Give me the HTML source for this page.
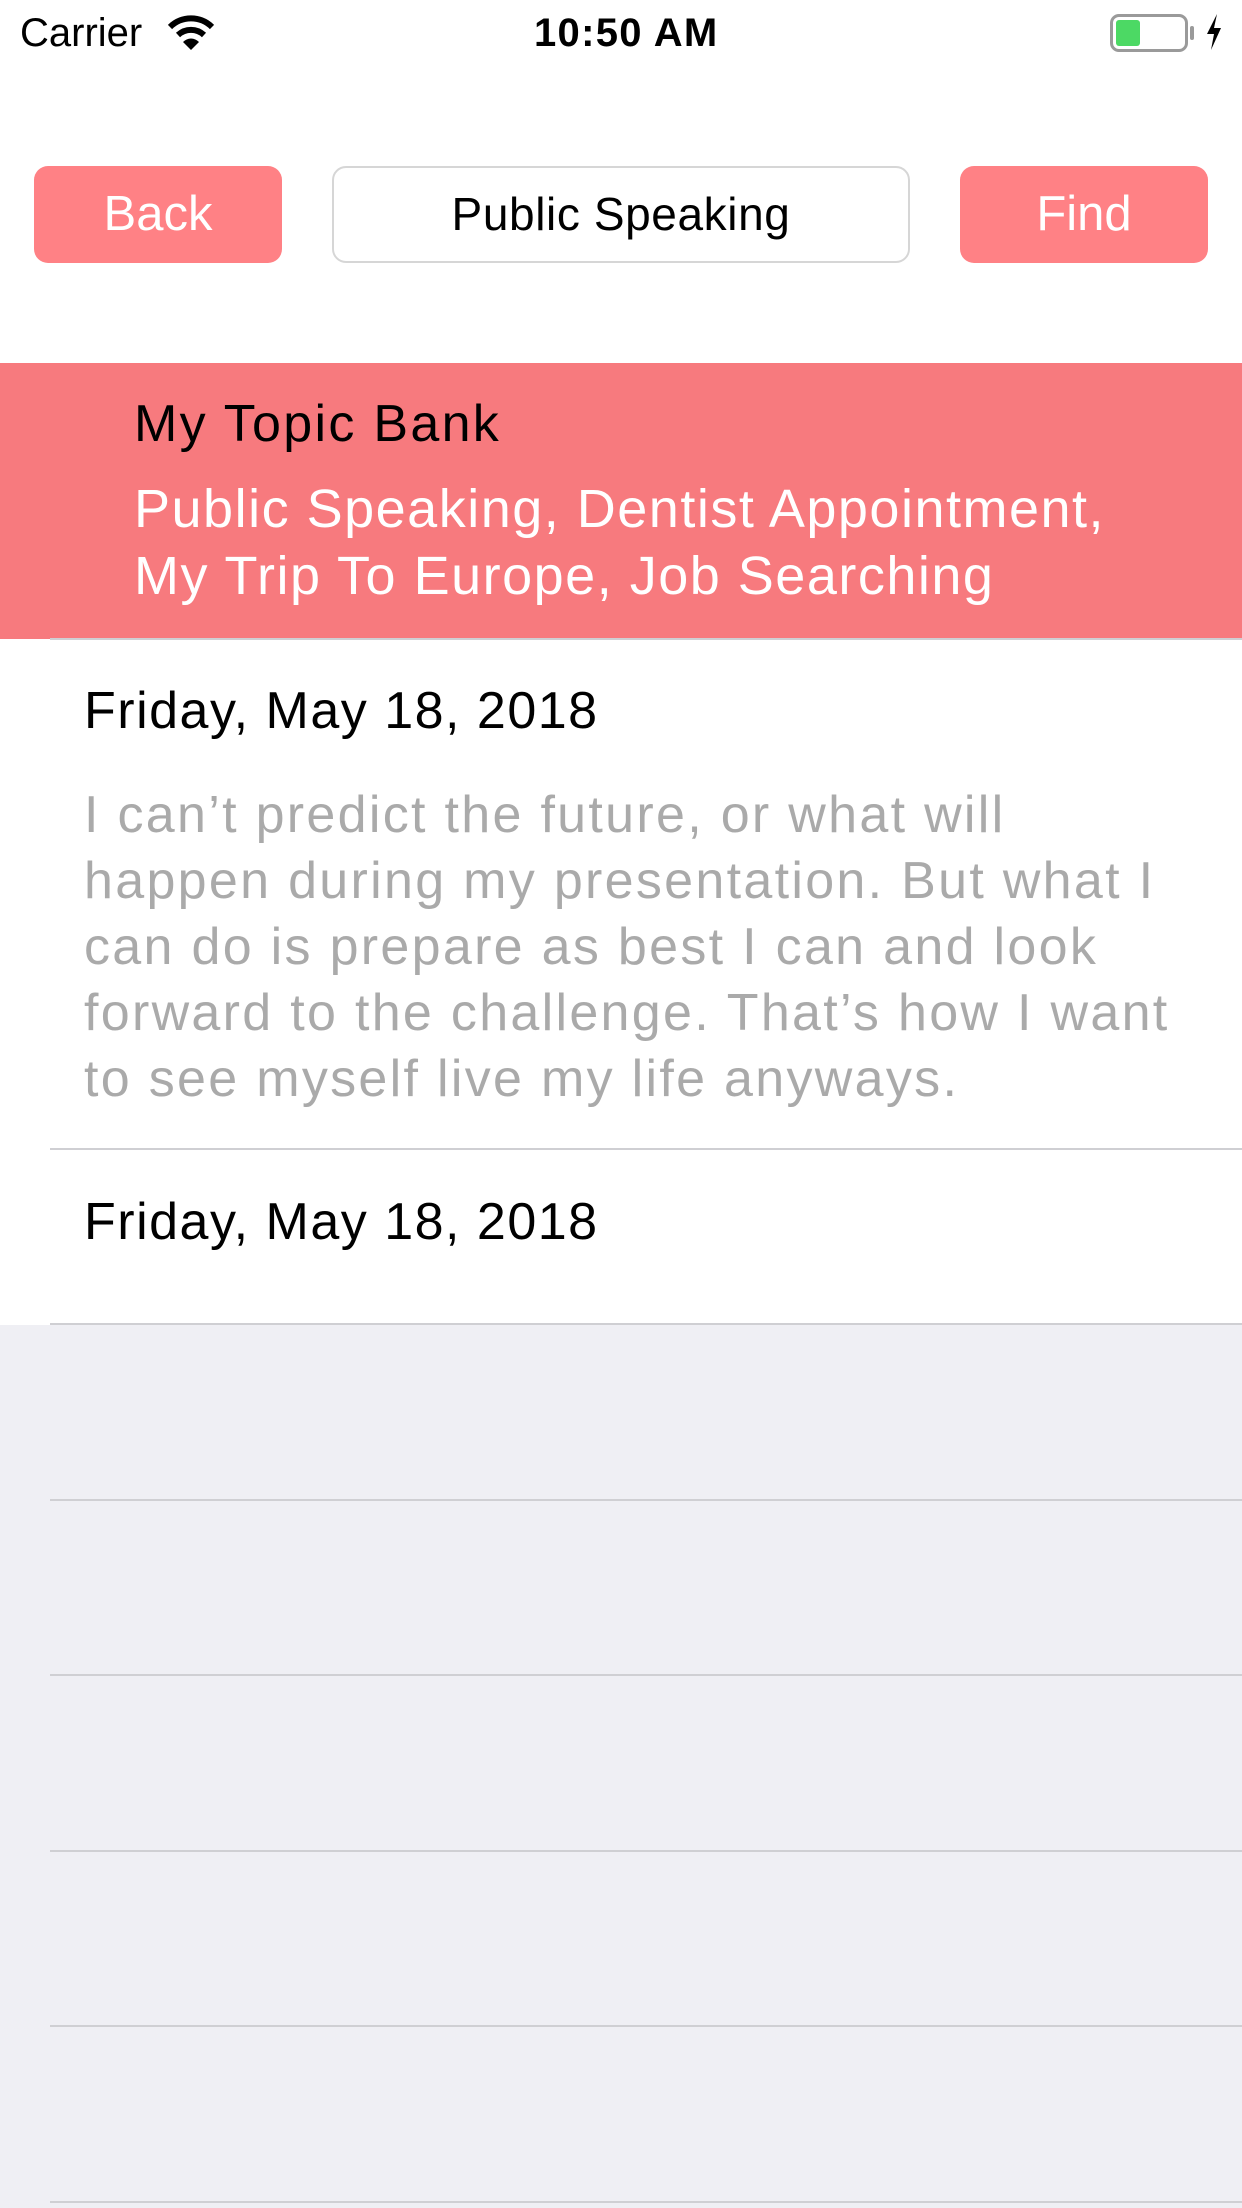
<!DOCTYPE html>
<html><head><meta charset="utf-8"><style>
*{margin:0;padding:0;box-sizing:border-box}
body{width:1242px;height:2208px;position:relative;background:#efeff4;font-family:"Liberation Sans",sans-serif;overflow:hidden}
.abs{position:absolute;white-space:nowrap}
.top{position:absolute;left:0;top:0;width:1242px;height:363px;background:#fff}
.btn{position:absolute;top:166px;height:97px;width:248px;background:#ff8185;border-radius:14px;color:#fff;font-size:49px;text-align:center;line-height:97px}
.field{position:absolute;top:166px;left:332px;width:578px;height:97px;border:2px solid #d6d6d6;border-radius:14px;background:#fff;text-align:center;line-height:93px;font-size:46px;letter-spacing:0.6px;color:#000}
.band{position:absolute;left:0;top:363px;width:1242px;height:276px;background:#f77a7e}
.white{position:absolute;left:0;top:639px;width:1242px;height:686px;background:#fff}
.sep{position:absolute;left:50px;right:0;height:2px;background:#cfcfd3}
.date{font-size:52px;letter-spacing:1.5px;color:#000}
.body{font-size:52px;letter-spacing:2.3px;color:#aaaaaa;line-height:66px}
</style></head><body>
<div class="top"></div>
<div class="abs" style="left:20px;top:11px;font-size:40px;color:#000">Carrier</div>
<svg class="abs" style="left:166px;top:14px" width="50" height="38" viewBox="0 0 50 38"><path d="M4 13 A30 30 0 0 1 46 13" stroke="#000" stroke-width="6" fill="none"/><path d="M12 21 A19 19 0 0 1 38 21" stroke="#000" stroke-width="6" fill="none"/><path d="M25 36 L17 28 A11 11 0 0 1 33 28 Z" fill="#000"/></svg>
<div class="abs" style="left:534px;top:11px;font-size:40px;font-weight:bold;letter-spacing:1.3px;color:#000">10:50 AM</div>
<div class="abs" style="left:1110px;top:14px;width:78px;height:38px;border:3px solid #9a9a9a;border-radius:9px"></div>
<div class="abs" style="left:1116px;top:20px;width:24px;height:26px;background:#4cd964;border-radius:3px"></div>
<div class="abs" style="left:1190px;top:26px;width:4px;height:14px;background:#9a9a9a;border-radius:2px"></div>
<svg class="abs" style="left:1204px;top:12px" width="20" height="40" viewBox="0 0 20 40"><path d="M13 2 L3 22 L10 22 L7 38 L17 16 L10 16 Z" fill="#000"/></svg>

<div class="btn" style="left:34px">Back</div>
<div class="field">Public Speaking</div>
<div class="btn" style="left:960px">Find</div>

<div class="band"></div>
<div class="abs" style="left:134px;top:394px;font-size:52px;letter-spacing:2.3px;color:#000">My Topic Bank</div>
<div class="abs" style="left:134px;top:476px;font-size:54px;letter-spacing:1.5px;color:#fff;line-height:67px">Public Speaking, Dentist Appointment,<br>My Trip To Europe, Job Searching</div>

<div class="white"></div>
<div class="sep" style="top:638px"></div>
<div class="abs date" style="left:84px;top:681px">Friday, May 18, 2018</div>
<div class="abs body" style="left:84px;top:782px">I can’t predict the future, or what will<br>happen during my presentation. But what I<br>can do is prepare as best I can and look<br>forward to the challenge. That’s how I want<br>to see myself live my life anyways.</div>
<div class="sep" style="top:1148px"></div>
<div class="abs date" style="left:84px;top:1192px">Friday, May 18, 2018</div>
<div class="sep" style="top:1323px"></div>
<div class="sep" style="top:1499px"></div>
<div class="sep" style="top:1674px"></div>
<div class="sep" style="top:1850px"></div>
<div class="sep" style="top:2025px"></div>
<div class="sep" style="top:2201px"></div>
</body></html>
